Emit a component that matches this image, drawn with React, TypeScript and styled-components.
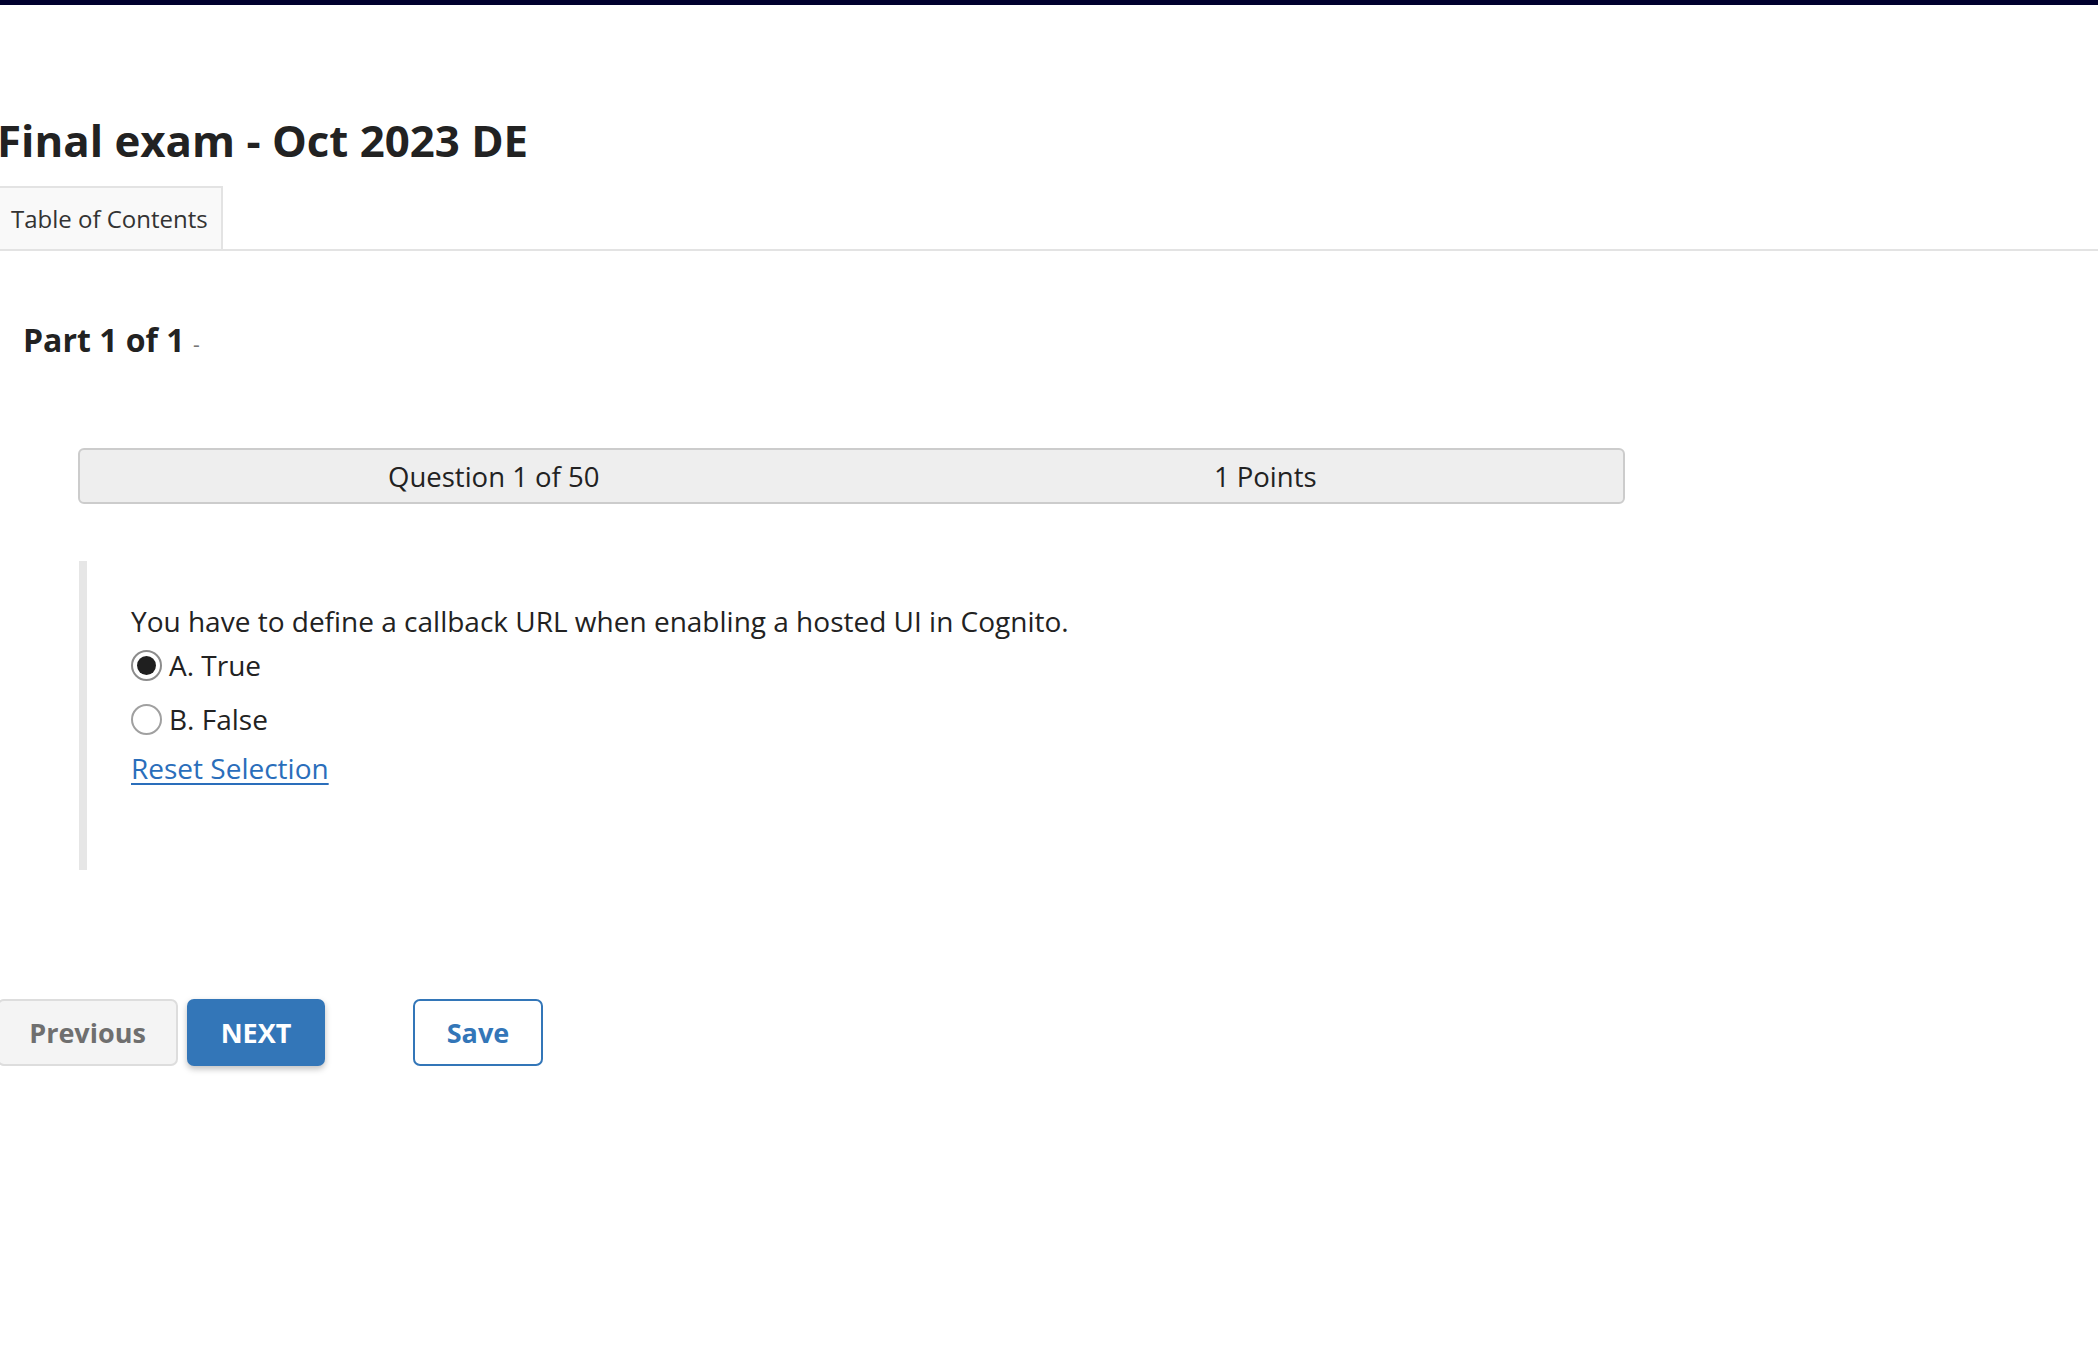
import React, { useState } from "react";
import styled, { createGlobalStyle } from "styled-components";

const GlobalStyle = createGlobalStyle`
  html, body {
    margin: 0;
    padding: 0;
    background: #ffffff;
    overflow-x: hidden;
  }
  body {
    font-family: "Open Sans", "Liberation Sans", sans-serif;
    color: #222222;
  }
`;

export default function App() {
  const [choice, setChoice] = useState<"A" | "B" | "">("A");

  return (
    <>
      <GlobalStyle />
      <TopBar />
      <Page>
        <Title>Final exam - Oct 2023 DE</Title>
        <TabRow>
          <Tab>Table of Contents</Tab>
        </TabRow>

        <PartHeading>
          Part 1 of 1 <PartDash>-</PartDash>
        </PartHeading>

        <QuestionBar>
          <BarCell>Question 1 of 50</BarCell>
          <BarCell>1 Points</BarCell>
        </QuestionBar>

        <QuestionBlock>
          <QuestionText>
            You have to define a callback URL when enabling a hosted UI in
            Cognito.
          </QuestionText>
          <OptionRow first onClick={() => setChoice("A")}>
            <Radio checked={choice === "A"} />
            A. True
          </OptionRow>
          <OptionRow onClick={() => setChoice("B")}>
            <Radio checked={choice === "B"} />
            B. False
          </OptionRow>
          <ResetLink href="#" onClick={(e) => { e.preventDefault(); setChoice(""); }}>
            Reset Selection
          </ResetLink>
        </QuestionBlock>

        <ButtonRow>
          <PrevButton>Previous</PrevButton>
          <NextButton>NEXT</NextButton>
          <SaveButton>Save</SaveButton>
        </ButtonRow>
      </Page>
    </>
  );
}

const TopBar = styled.div`
  height: 5px;
  background-color: #00002e;
`;

const Page = styled.div`
  margin-left: -3px;
  padding-bottom: 200px;
`;

const Title = styled.h1`
  margin: 109px 0 0 0;
  font-size: 43.8px;
  line-height: 52px;
  font-weight: 700;
  color: #222222;
`;

const TabRow = styled.div`
  margin-top: 20px;
  display: flex;
  border-bottom: 2px solid #e3e3e3;
`;

const Tab = styled.div`
  height: 61px;
  padding: 0 13px 0 12px;
  display: flex;
  align-items: center;
  background-color: #f9f9f9;
  border: 2px solid #e3e3e3;
  border-bottom: none;
  font-size: 24px;
  color: #333333;
`;

const PartHeading = styled.h2`
  margin: 69px 0 0 0;
  padding-left: 26px;
  font-size: 32px;
  line-height: 40px;
  font-weight: 700;
  color: #222222;
`;

const PartDash = styled.span`
  font-size: 21px;
  font-weight: 400;
  color: #777777;
`;

const QuestionBar = styled.div`
  margin: 84px 0 0 81px;
  width: 1547px;
  height: 56px;
  box-sizing: border-box;
  display: grid;
  grid-template-columns: 1fr 1fr;
  align-items: center;
  background-color: #eeeeee;
  border: 2px solid #cccccc;
  border-radius: 6px;
`;

const BarCell = styled.div`
  padding-left: 56px;
  text-align: center;
  font-size: 27.5px;
  color: #222222;
`;

const QuestionBlock = styled.div`
  margin: 57px 0 0 82px;
  border-left: 8px solid #e6e6e6;
  padding: 41px 0 83px 44px;
  display: flex;
  flex-direction: column;
  align-items: flex-start;
`;

const QuestionText = styled.div`
  font-size: 28px;
  line-height: 38px;
`;

const OptionRow = styled.label<{ first?: boolean }>`
  margin-top: ${(props) => (props.first ? "5px" : "14px")};
  height: 40px;
  display: flex;
  align-items: center;
  gap: 7px;
  font-size: 28px;
  cursor: pointer;
`;

const Radio = styled.span<{ checked: boolean }>`
  width: 31px;
  height: 31px;
  box-sizing: border-box;
  border-radius: 50%;
  border: 2px solid ${(props) => (props.checked ? "#8c8c8c" : "#a0a0a0")};
  background: #ffffff;
  display: flex;
  align-items: center;
  justify-content: center;
  &::after {
    content: "";
    display: ${(props) => (props.checked ? "block" : "none")};
    width: 19px;
    height: 19px;
    border-radius: 50%;
    background: #1f1f1f;
  }
`;

const ResetLink = styled.a`
  margin-top: 10px;
  font-size: 28px;
  line-height: 38px;
  color: #2a6ebb;
  text-decoration: underline;
  text-underline-offset: 4px;
  text-decoration-thickness: 2px;
`;

const ButtonRow = styled.div`
  margin-top: 129px;
  display: flex;
  align-items: center;
`;

const BaseButton = styled.button`
  height: 67px;
  box-sizing: border-box;
  border-radius: 7px;
  font-family: "Open Sans", "Liberation Sans", sans-serif;
  font-size: 27px;
  font-weight: 700;
  cursor: pointer;
`;

const PrevButton = styled(BaseButton)`
  width: 181px;
  background-color: #f4f4f4;
  border: 2px solid #dddddd;
  color: #6f6f6f;
`;

const NextButton = styled(BaseButton)`
  margin-left: 9px;
  width: 138px;
  background-color: #3376b8;
  border: none;
  color: #ffffff;
  box-shadow: 0 3px 6px rgba(0, 0, 0, 0.25);
`;

const SaveButton = styled(BaseButton)`
  margin-left: 88px;
  width: 130px;
  background-color: #ffffff;
  border: 2px solid #3376b8;
  color: #3376b8;
`;
